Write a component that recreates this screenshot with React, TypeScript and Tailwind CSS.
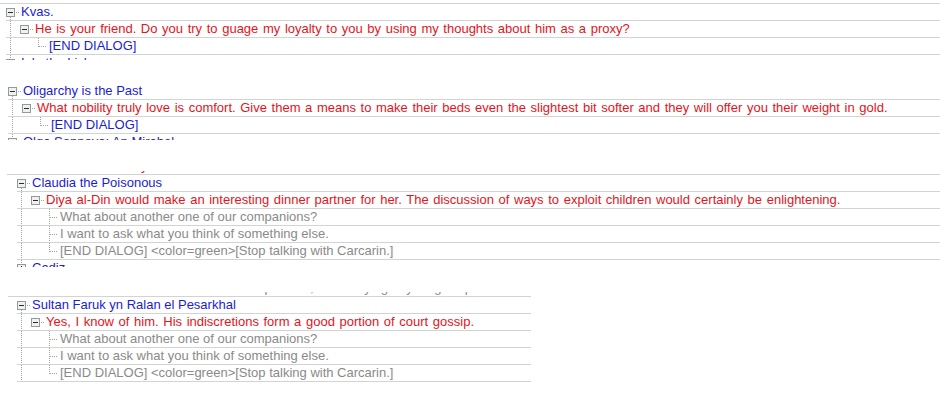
import React from "react";

type Kind = "open" | "closed" | "leaf";

type Row = {
  text: string;
  color: string;
  kind: Kind;
  guides: boolean[];
  next?: boolean;
  top?: boolean;
};

const BLUE = "text-[#1c1cd2]";
const RED = "text-[#e3141c] [word-spacing:1px]";
const GRAY = "text-[#8a8a8a]";

const DOT = { stroke: "#a3a3a3", strokeDasharray: "1 1", shapeRendering: "crispEdges" as const };

const Guide = ({ line }: { line: boolean }) => (
  <svg width="14" height="16" className="shrink-0">
    {line && <line x1="4.5" y1="0" x2="4.5" y2="16" {...DOT} />}
  </svg>
);

const NodeCell = ({ kind, next, top }: { kind: Kind; next?: boolean; top?: boolean }) => (
  <svg width="14" height="16" className="shrink-0">
    {kind === "leaf" ? (
      <>
        <line x1="4.5" y1="0" x2="4.5" y2={next ? 16 : 9} {...DOT} />
        <line x1="5" y1="8.5" x2="12" y2="8.5" {...DOT} />
      </>
    ) : (
      <>
        {top && <line x1="4.5" y1="0" x2="4.5" y2="4" {...DOT} />}
        {next && <line x1="4.5" y1="13" x2="4.5" y2="16" {...DOT} />}
        <line x1="10" y1="8.5" x2="13" y2="8.5" {...DOT} />
        <rect x="0.5" y="4.5" width="8" height="8" fill="#f1f1ec" stroke="#8f9aa4" shapeRendering="crispEdges" />
        <line x1="2" y1="8.5" x2="7" y2="8.5" stroke="#2b2b2b" shapeRendering="crispEdges" />
        {kind === "closed" && (
          <line x1="4.5" y1="6" x2="4.5" y2="11" stroke="#2b2b2b" shapeRendering="crispEdges" />
        )}
      </>
    )}
  </svg>
);

const TreeRow = ({ row, border = true }: { row: Row; border?: boolean }) => (
  <div className={`flex h-[17px] shrink-0 ${border ? "border-b border-[#d3d3d3]" : ""}`}>
    {row.guides.map((g, i) => (
      <Guide key={i} line={g} />
    ))}
    <NodeCell kind={row.kind} next={row.next} top={row.top} />
    <span className={`ml-[1px] whitespace-nowrap leading-[16px] ${row.color}`}>{row.text}</span>
  </div>
);

const Panel = ({
  rows,
  tail,
  className,
}: {
  rows: Row[];
  tail?: { row: Row; h: string };
  className: string;
}) => (
  <div className={`flex flex-col ${className}`}>
    {rows.map((r, i) => (
      <TreeRow key={i} row={r} />
    ))}
    {tail && (
      <div className={`${tail.h} overflow-hidden`}>
        <TreeRow row={tail.row} border={false} />
      </div>
    )}
  </div>
);

// bottom slice of a row that sits above a panel (only descenders show)
const Slice = ({ text, color, className }: { text: string; color: string; className: string }) => (
  <div className={`flex flex-col justify-end overflow-hidden ${className}`}>
    <span className={`whitespace-nowrap leading-[16px] shrink-0 ${color}`}>{text}</span>
  </div>
);

const companions: Row[] = [
  { text: "What about another one of our companions?", color: GRAY, kind: "leaf", guides: [true, false], next: true },
  { text: "I want to ask what you think of something else.", color: GRAY, kind: "leaf", guides: [true, false], next: true },
  {
    text: "[END DIALOG] <color=green>[Stop talking with Carcarin.]",
    color: GRAY,
    kind: "leaf",
    guides: [true, false],
  },
];

export default function App() {
  return (
    <div className="h-[402px] w-[940px] overflow-hidden bg-white font-['Liberation_Sans',Arial,sans-serif] text-[13px]">
      {/* Kvas */}
      <Panel
        className="mt-[3px] border-t border-[#d3d3d3] pl-[6px]"
        rows={[
          { text: "Kvas.", color: BLUE, kind: "open", guides: [], next: true },
          {
            text: "He is your friend. Do you try to guage my loyalty to you by using my thoughts about him as a proxy?",
            color: RED,
            kind: "open",
            guides: [true],
          },
          { text: "[END DIALOG]", color: BLUE, kind: "leaf", guides: [true, false] },
        ]}
        tail={{ h: "h-[5px]", row: { text: "Iola the Lich", color: BLUE, kind: "closed", guides: [], top: true } }}
      />

      {/* Oligarchy */}
      <Panel
        className="mt-[23px] ml-[4px] pl-[4px]"
        rows={[
          { text: "Oligarchy is the Past", color: BLUE, kind: "open", guides: [], next: true },
          {
            text: "What nobility truly love is comfort. Give them a means to make their beds even the slightest bit softer and they will offer you their weight in gold.",
            color: RED,
            kind: "open",
            guides: [true],
          },
          { text: "[END DIALOG]", color: BLUE, kind: "leaf", guides: [true, false] },
        ]}
        tail={{
          h: "h-[6px]",
          row: { text: "Olga Sonnova: An Mirabel", color: BLUE, kind: "closed", guides: [], top: true },
        }}
      />

      <Slice text="y" color={RED} className="mt-[31px] h-[3px] pl-[141px]" />

      {/* Claudia */}
      <Panel
        className="ml-[7px] border-t border-[#d3d3d3] pl-[10px]"
        rows={[
          { text: "Claudia the Poisonous", color: BLUE, kind: "open", guides: [], next: true },
          {
            text: "Diya al-Din would make an interesting dinner partner for her. The discussion of ways to exploit children would certainly be enlightening.",
            color: RED,
            kind: "open",
            guides: [true],
          },
          ...companions,
        ]}
        tail={{ h: "h-[7px]", row: { text: "Cadiz", color: BLUE, kind: "closed", guides: [], top: true } }}
      />

      <Slice
        text="What about another one of our companions, i was saying to you. gossip"
        color={GRAY}
        className="mt-[25px] ml-[8px] h-[4px] pl-[52px]"
      />

      {/* Sultan */}
      <Panel
        className="ml-[8px] w-[523px] border-t border-[#d3d3d3] pl-[9px]"
        rows={[
          { text: "Sultan Faruk yn Ralan el Pesarkhal", color: BLUE, kind: "open", guides: [], next: true },
          {
            text: "Yes, I know of him. His indiscretions form a good portion of court gossip.",
            color: RED,
            kind: "open",
            guides: [true],
          },
          ...companions,
        ]}
      />
    </div>
  );
}
